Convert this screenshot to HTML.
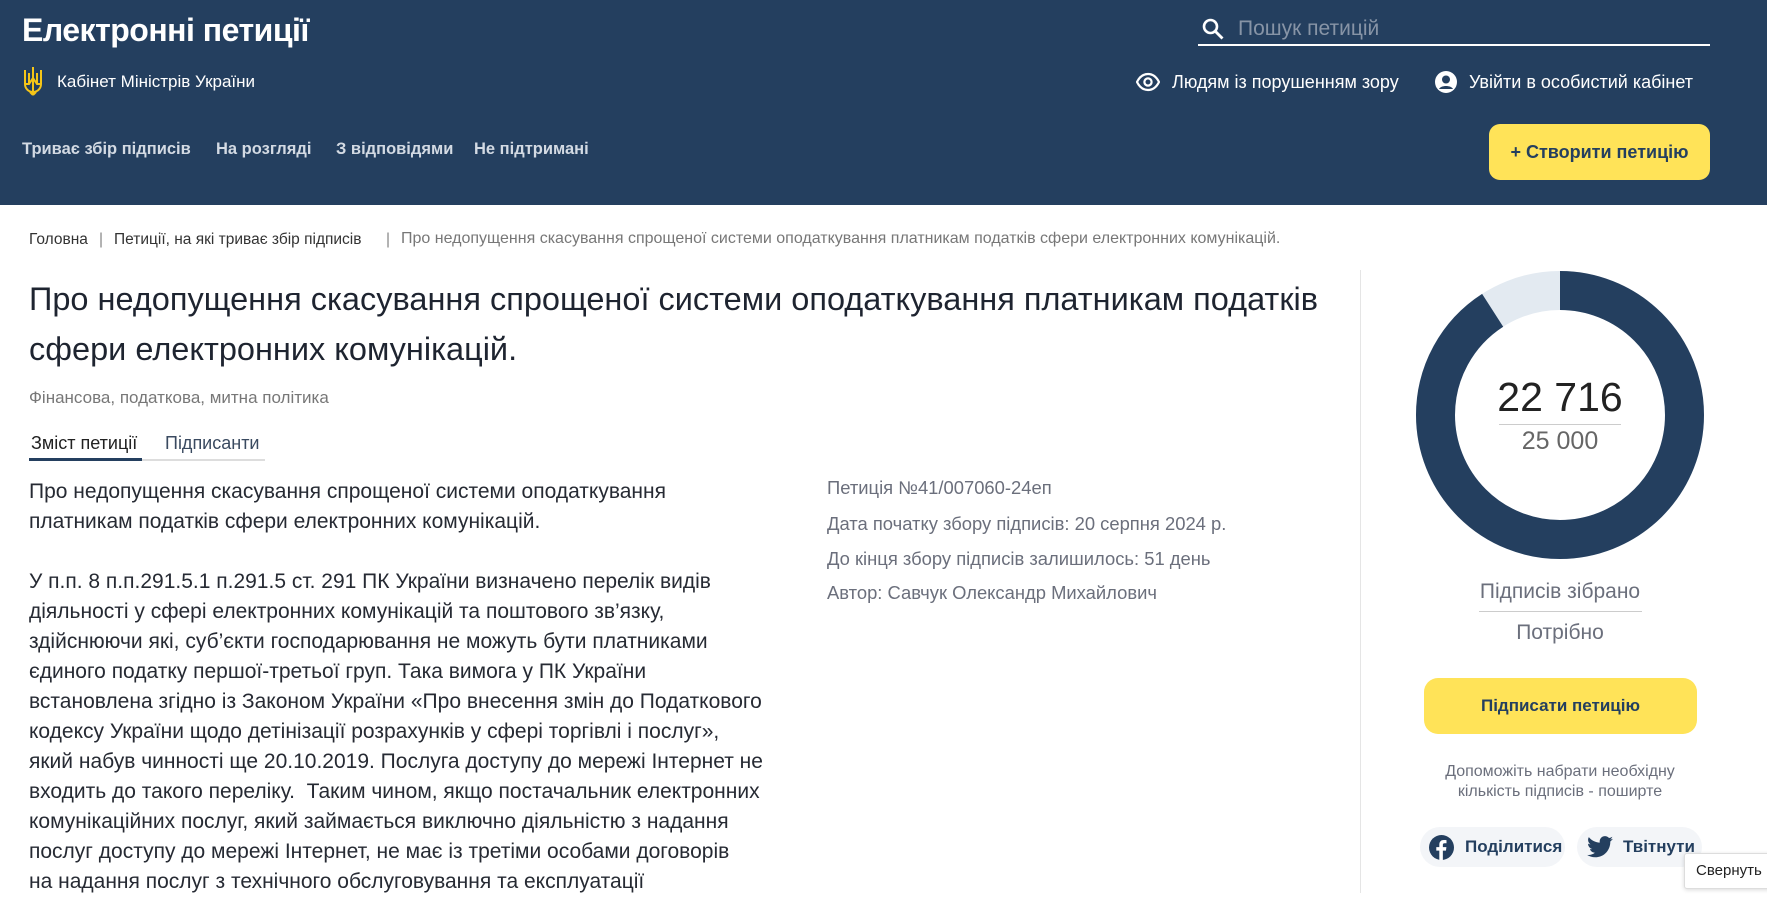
<!DOCTYPE html>
<html><head><meta charset="utf-8"><style>
*{margin:0;padding:0;box-sizing:border-box}
body{width:1767px;height:893px;overflow:hidden;background:#fff;font-family:"Liberation Sans","DejaVu Sans",sans-serif;position:relative;color:#222}
.a{position:absolute;white-space:nowrap}
header{position:absolute;left:0;top:0;width:1767px;height:205px;background:#243f5f}
.nav{font-weight:bold;font-size:16.5px;color:#d3dae3;top:140px}
.bc{top:231px;font-size:15.5px;color:#333}
.info{left:827px;font-size:18.4px;color:#6b6f7c}
.body{left:29px;top:477px;font-size:21px;line-height:30px;color:#262a33}
</style></head><body>
<header>
<div class="a" style="left:22px;top:12px;font-size:32px;font-weight:bold;color:#fff;letter-spacing:-0.5px">Електронні петиції</div>
<svg class="a" style="left:22px;top:66px" width="22" height="32" viewBox="0 0 22 32"><path d="M11 1v28M11 29l-3-3M11 29l3-3M3 4v14c0 5 4 8 8 8s8-3 8-8V4M3 18h4l4-6 4 6h4M7 7v11M15 7v11" stroke="#f5c518" stroke-width="2" fill="none"/></svg>
<div class="a" style="left:57px;top:72px;font-size:17px;color:#fff">Кабінет Міністрів України</div>
<div class="a nav" style="left:22px">Триває збір підписів</div>
<div class="a nav" style="left:216px">На розгляді</div>
<div class="a nav" style="left:336px">З відповідями</div>
<div class="a nav" style="left:474px">Не підтримані</div>
<svg class="a" style="left:1201px;top:17px" width="24" height="24" viewBox="0 0 24 24"><circle cx="9.5" cy="9.5" r="6.5" stroke="#fff" stroke-width="2.6" fill="none"/><path d="M14.5 14.5l7 7" stroke="#fff" stroke-width="2.8"/></svg>
<div class="a" style="left:1238px;top:17px;font-size:21px;color:#8794a6">Пошук петицій</div>
<div class="a" style="left:1198px;top:44px;width:512px;height:2px;background:#fff"></div>
<svg class="a" style="left:1136px;top:72px" width="24" height="20" viewBox="0 0 24 20"><path d="M1 10C4 4 8 2 12 2s8 2 11 8c-3 6-7 8-11 8S4 16 1 10z" stroke="#fff" stroke-width="2.2" fill="none"/><circle cx="12" cy="10" r="3.6" stroke="#fff" stroke-width="2.2" fill="none"/></svg>
<div class="a" style="left:1172px;top:72px;font-size:18px;color:#fff">Людям із порушенням зору</div>
<svg class="a" style="left:1435px;top:71px" width="22" height="22" viewBox="0 0 22 22"><circle cx="11" cy="11" r="11" fill="#fff"/><circle cx="11" cy="8.5" r="4" fill="#243f5f"/><path d="M4 18c2-4 12-4 14 0" fill="#243f5f"/></svg>
<div class="a" style="left:1469px;top:72px;font-size:18px;color:#fff">Увійти в особистий кабінет</div>
<div class="a" style="left:1489px;top:124px;width:221px;height:56px;background:#ffe358;border-radius:11px;font-size:18px;font-weight:bold;color:#243f5f;text-align:center;line-height:56px">+ Створити петицію</div>
</header>
<div class="a bc" style="left:29px">Головна</div>
<div class="a bc" style="left:99px;color:#888">|</div>
<div class="a bc" style="left:114px">Петиції, на які триває збір підписів</div>
<div class="a bc" style="left:386px;color:#888">|</div>
<div class="a bc" style="left:401px;color:#777;font-size:16px;top:230px">Про недопущення скасування спрощеної системи оподаткування платникам податків сфери електронних комунікацій.</div>
<div class="a" style="left:29px;top:274px;font-size:32.5px;line-height:50px;color:#1e2430">Про недопущення скасування спрощеної системи оподаткування платникам податків<br>сфери електронних комунікацій.</div>
<div class="a" style="left:29px;top:388px;font-size:17px;color:#777">Фінансова, податкова, митна політика</div>
<div class="a" style="left:31px;top:433px;font-size:18px;color:#222">Зміст петиції</div>
<div class="a" style="left:165px;top:433px;font-size:18px;color:#3a4a60">Підписанти</div>
<div class="a" style="left:29px;top:459px;width:236px;height:2px;background:#ddd"></div>
<div class="a" style="left:29px;top:458px;width:113px;height:3px;background:#243f5f"></div>
<div class="a body">Про недопущення скасування спрощеної системи оподаткування<br>платникам податків сфери електронних комунікацій.<br><br>У п.п. 8 п.п.291.5.1 п.291.5 ст. 291 ПК України визначено перелік видів<br>діяльності у сфері електронних комунікацій та поштового зв’язку,<br>здійснюючи які, суб’єкти господарювання не можуть бути платниками<br>єдиного податку першої-третьої груп. Така вимога у ПК України<br>встановлена згідно із Законом України «Про внесення змін до Податкового<br>кодексу України щодо детінізації розрахунків у сфері торгівлі і послуг»,<br>який набув чинності ще 20.10.2019. Послуга доступу до мережі Інтернет не<br>входить до такого переліку.&nbsp; Таким чином, якщо постачальник електронних<br>комунікаційних послуг, який займається виключно діяльністю з надання<br>послуг доступу до мережі Інтернет, не має із третіми особами договорів<br>на надання послуг з технічного обслуговування та експлуатації</div>
<div class="a info" style="top:477px">Петиція №41/007060-24еп</div>
<div class="a info" style="top:513px">Дата початку збору підписів: 20 серпня 2024 р.</div>
<div class="a info" style="top:548px">До кінця збору підписів залишилось: 51 день</div>
<div class="a info" style="top:582px">Автор: Савчук Олександр Михайлович</div>
<div class="a" style="left:1360px;top:270px;width:1px;height:623px;background:#e5e5e5"></div>
<svg class="a" style="left:1414px;top:269px" width="292" height="292" viewBox="0 0 292 292"><circle cx="146" cy="146" r="124.5" stroke="#e3eaf1" stroke-width="39" fill="none"/><circle cx="146" cy="146" r="124.5" stroke="#243f5f" stroke-width="39" fill="none" stroke-dasharray="710.8 1000" transform="rotate(-90 146 146)"/></svg>
<div class="a" style="left:1460px;top:374px;width:200px;text-align:center;font-size:41px;color:#222">22 716</div>
<div class="a" style="left:1499px;top:424px;width:122px;height:1px;background:#ccc"></div>
<div class="a" style="left:1460px;top:427px;width:200px;text-align:center;font-size:25px;color:#666">25 000</div>
<div class="a" style="left:1460px;top:580px;width:200px;text-align:center;font-size:21px;color:#6b6f7c">Підписів зібрано</div>
<div class="a" style="left:1479px;top:611px;width:163px;height:1px;background:#ccc"></div>
<div class="a" style="left:1460px;top:621px;width:200px;text-align:center;font-size:21px;color:#6b6f7c">Потрібно</div>
<div class="a" style="left:1424px;top:678px;width:273px;height:56px;background:#ffe358;border-radius:14px;text-align:center;line-height:56px;font-size:17px;font-weight:bold;color:#243f5f">Підписати петицію</div>
<div class="a" style="left:1410px;top:762px;width:300px;text-align:center;font-size:16px;line-height:20px;color:#6b6f7c">Допоможіть набрати необхідну<br>кількість підписів - поширте</div>
<div class="a" style="left:1420px;top:827px;width:145px;height:40px;background:#f3f5f8;border-radius:20px"></div>
<svg class="a" style="left:1429px;top:835px" width="25" height="25" viewBox="0 0 24 24"><circle cx="12" cy="12" r="12" fill="#243f5f"/><path d="M13.3 24v-9h3l.4-3.4h-3.4V9.5c0-1 .3-1.6 1.7-1.6h1.8V4.9c-.3 0-1.4-.1-2.6-.1-2.6 0-4.3 1.6-4.3 4.5v2.3H7v3.4h2.9V24z" fill="#fff"/></svg>
<div class="a" style="left:1465px;top:837px;font-size:17px;font-weight:bold;color:#243f5f">Поділитися</div>
<div class="a" style="left:1577px;top:827px;width:125px;height:40px;background:#f3f5f8;border-radius:20px"></div>
<svg class="a" style="left:1587px;top:836px" width="26" height="22" viewBox="0 0 24 20"><path d="M24 2.4c-.9.4-1.8.6-2.8.8 1-.6 1.8-1.6 2.200-2.7-1 .6-2 1-3.1 1.2C19.3.6 18 0 16.6 0c-2.7 0-4.9 2.2-4.9 4.9 0 .4 0 .8.1 1.1C7.7 5.800 4.1 3.9 1.7.9c-.4.7-.7 1.6-.7 2.5 0 1.7.9 3.2 2.2 4.1-.8 0-1.6-.2-2.2-.6v.1c0 2.4 1.7 4.4 3.9 4.8-.4.1-.8.2-1.3.2-.3 0-.6 0-.9-.1.6 2 2.4 3.4 4.6 3.4-1.7 1.3-3.8 2.1-6.1 2.1-.4 0-.8 0-1.2-.1 2.2 1.4 4.8 2.2 7.5 2.2 9.1 0 14-7.5 14-14v-.6c1-.7 1.8-1.6 2.4-2.5z" fill="#243f5f"/></svg>
<div class="a" style="left:1623px;top:837px;font-size:17px;font-weight:bold;color:#243f5f">Твітнути</div>
<div class="a" style="left:1684px;top:853px;width:100px;height:36px;background:#fff;border:1px solid #ddd;border-radius:3px;box-shadow:0 1px 4px rgba(0,0,0,.15);font-size:15px;line-height:34px;padding-left:11px;color:#222">Свернуть все</div>
</body></html>
